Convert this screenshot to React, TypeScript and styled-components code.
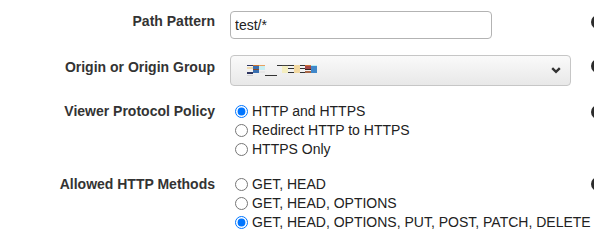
import React from "react";
import styled, { createGlobalStyle } from "styled-components";

const GlobalStyle = createGlobalStyle`
  html, body {
    margin: 0;
    padding: 0;
    background: #fff;
    overflow: hidden;
  }
  body {
    font-family: "Liberation Sans", Arial, sans-serif;
    font-size: 14px;
    color: #222;
  }
`;

const Form = styled.div`
  display: grid;
  grid-template-columns: 215px 341px 30px;
  align-content: start;
  column-gap: 15px;
  row-gap: 16px;
  padding-top: 11px;
  width: 594px;
  height: 241px;
  box-sizing: border-box;
  overflow: hidden;
`;

const Label = styled.div<{ $offset: number }>`
  text-align: right;
  font-weight: bold;
  color: #333;
  line-height: 19px;
  padding-top: ${(p) => p.$offset}px;
`;

const Control = styled.div`
  display: flex;
  flex-direction: column;
`;

const TextInput = styled.input`
  box-sizing: border-box;
  width: 262px;
  height: 28px;
  border: 1px solid #b3b3b3;
  border-radius: 4px;
  padding: 0 4px;
  font-family: "Liberation Sans", Arial, sans-serif;
  font-size: 14px;
  color: #222;
  outline: none;
`;

const SelectBox = styled.div`
  box-sizing: border-box;
  height: 31px;
  width: 341px;
  display: flex;
  align-items: center;
  justify-content: space-between;
  padding: 0 9px 0 16px;
  border: 1px solid #c6c6c6;
  border-radius: 4px;
  background: linear-gradient(#fafafa, #e8e8e8);
`;

const RadioRow = styled.label`
  display: flex;
  align-items: center;
  height: 19px;
  line-height: 19px;
  color: #222;
  white-space: nowrap;

  input {
    margin: 0 4px 0 5px;
    width: 13px;
    height: 13px;
  }
`;

const InfoDot = styled.span<{ $top: number }>`
  display: block;
  width: 14px;
  height: 14px;
  border-radius: 50%;
  background: #2b2b2b;
  margin-left: 5px;
  margin-top: ${(p) => p.$top}px;
`;

function Redacted() {
  // pixelated blur that hides the origin name
  const blocks: [number, number, number, number, string][] = [
    [0, 0, 6, 1, "#2e3560"],
    [0, 2, 6, 2, "#f1dcb0"],
    [0, 7, 6, 2, "#2e3560"],
    [0, 10, 6, 1, "#d4d4d4"],
    [6, 0, 6, 1, "#c9742f"],
    [6, 1, 6, 7, "#3a6fb0"],
    [6, 4, 6, 1, "#8a4a2a"],
    [12, 0, 6, 1, "#e8a060"],
    [12, 1, 6, 4, "#c8eef2"],
    [12, 6, 6, 2, "#e6e6e6"],
    [18, 10, 12, 1, "#333"],
    [30, 0, 5, 1, "#333"],
    [35, 0, 6, 1, "#444"],
    [35, 1, 6, 7, "#f4eec0"],
    [41, 0, 6, 1, "#333"],
    [41, 3, 6, 1, "#333"],
    [41, 7, 6, 1, "#333"],
    [47, 0, 6, 8, "#f2d9a2"],
    [53, 0, 5, 1, "#333"],
    [53, 3, 5, 1, "#333"],
    [53, 7, 5, 1, "#333"],
    [58, 0, 6, 1, "#d2743a"],
    [58, 1, 6, 3, "#a34848"],
    [58, 4, 6, 1, "#332222"],
    [58, 6, 6, 2, "#a86848"],
    [64, 0, 6, 1, "#b8eef4"],
    [64, 1, 6, 7, "#4087c9"],
  ];
  return (
    <svg width="70" height="12" viewBox="0 0 70 12" style={{ marginTop: 1 }}>
      {blocks.map(([x, y, w, h, c], i) => (
        <rect key={i} x={x} y={y} width={w} height={h} fill={c} />
      ))}
    </svg>
  );
}

function Chevron() {
  return (
    <svg width="10" height="7" viewBox="0 0 10 7">
      <path d="M1.2 1.2 L5 4.8 L8.8 1.2" fill="none" stroke="#333" strokeWidth="2.4" />
    </svg>
  );
}

const protocols = ["HTTP and HTTPS", "Redirect HTTP to HTTPS", "HTTPS Only"];
const methods = [
  "GET, HEAD",
  "GET, HEAD, OPTIONS",
  "GET, HEAD, OPTIONS, PUT, POST, PATCH, DELETE",
];

export default function App() {
  return (
    <>
      <GlobalStyle />
      <Form>
        <Label $offset={1}>Path Pattern</Label>
        <Control>
          <TextInput defaultValue="test/*" />
        </Control>
        <InfoDot $top={4} />

        <Label $offset={3}>Origin or Origin Group</Label>
        <Control>
          <SelectBox>
            <Redacted />
            <Chevron />
          </SelectBox>
        </Control>
        <InfoDot $top={4} />

        <Label $offset={0}>Viewer Protocol Policy</Label>
        <Control>
          {protocols.map((p, i) => (
            <RadioRow key={p}>
              <input type="radio" name="protocol" defaultChecked={i === 0} />
              {p}
            </RadioRow>
          ))}
        </Control>
        <InfoDot $top={3} />

        <Label $offset={0}>Allowed HTTP Methods</Label>
        <Control>
          {methods.map((m, i) => (
            <RadioRow key={m}>
              <input type="radio" name="methods" defaultChecked={i === 2} />
              {m}
            </RadioRow>
          ))}
        </Control>
        <InfoDot $top={2} />
      </Form>
    </>
  );
}
